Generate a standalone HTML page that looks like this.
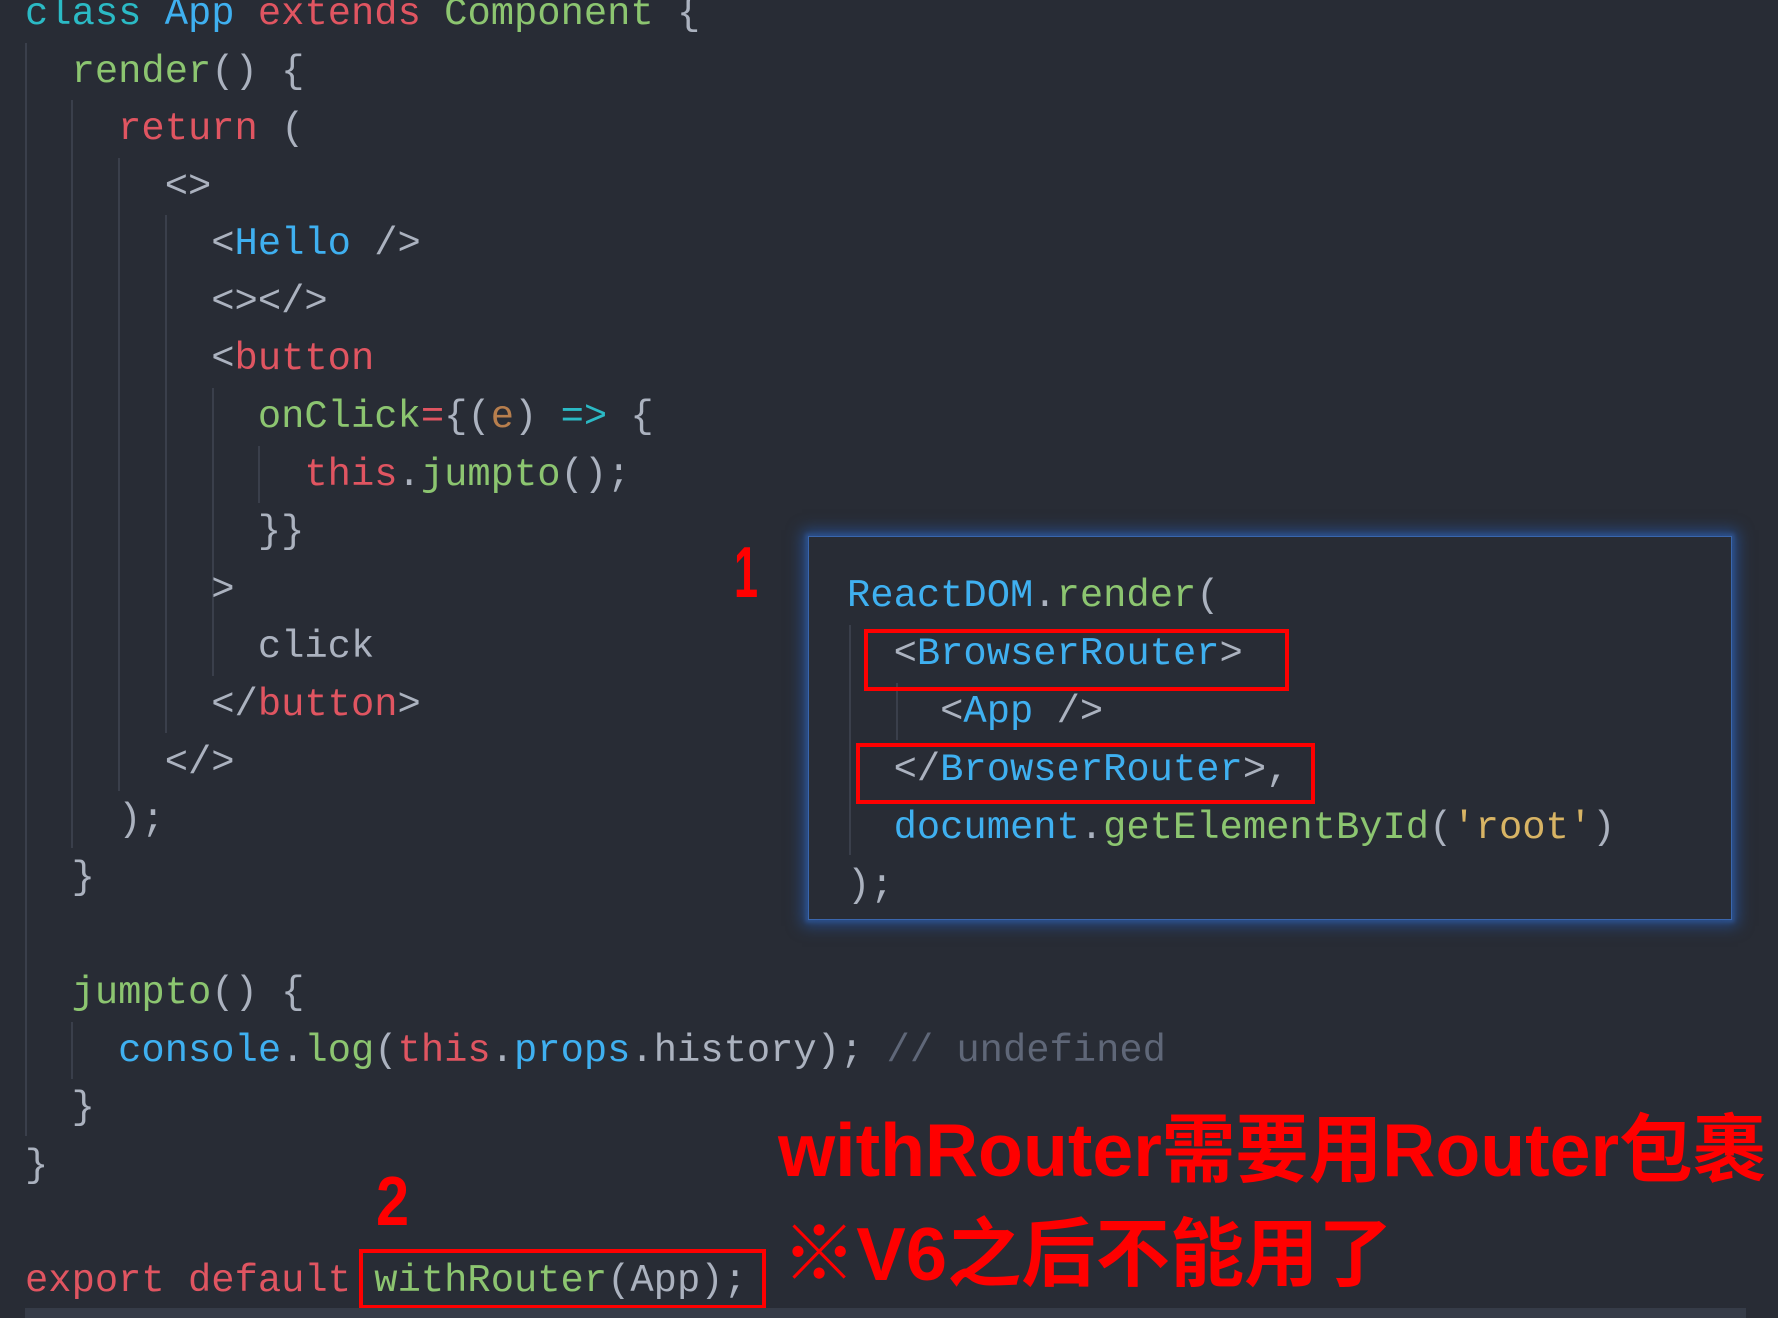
<!DOCTYPE html>
<html><head><meta charset="utf-8"><style>
html,body{margin:0;padding:0;background:#282c35;width:1778px;height:1318px;overflow:hidden;position:relative}
.l{position:absolute;white-space:pre;font-family:"Liberation Mono",monospace;font-size:38.8px;line-height:58px;height:58px;color:#abb2bf}
.g{position:absolute;width:2px;background:#3a3f4b}
.c{color:#2bbac5}.b{color:#3fb0f0}.r{color:#e05561}.gr{color:#8cc570}.o{color:#b77e4d}.y{color:#d8b464}.cm{color:#5f6778}
.box{position:absolute;border:4px solid #ff0000}
.red{position:absolute;color:#ff0000;font-family:"Liberation Sans","Noto Sans CJK SC",sans-serif;font-weight:bold;white-space:nowrap;transform-origin:0 50%}
</style></head><body>
<div class="g" style="left:25px;top:43px;height:1093px"></div>
<div class="g" style="left:71px;top:100px;height:748px"></div>
<div class="g" style="left:118px;top:158px;height:633px"></div>
<div class="g" style="left:165px;top:215px;height:518px"></div>
<div class="g" style="left:212px;top:388px;height:288px"></div>
<div class="g" style="left:258px;top:446px;height:57px"></div>
<div class="g" style="left:71px;top:1022px;height:57px"></div>

<div class="l" style="left:25px;top:-15px"><span class="c">class</span> <span class="b">App</span> <span class="r">extends</span> <span class="gr">Component</span> {</div>
<div class="l" style="left:25px;top:43px">  <span class="gr">render</span>() {</div>
<div class="l" style="left:25px;top:100px">    <span class="r">return</span> (</div>
<div class="l" style="left:25px;top:158px">      &lt;&gt;</div>
<div class="l" style="left:25px;top:215px">        &lt;<span class="b">Hello</span> /&gt;</div>
<div class="l" style="left:25px;top:273px">        &lt;&gt;&lt;/&gt;</div>
<div class="l" style="left:25px;top:330px">        &lt;<span class="r">button</span></div>
<div class="l" style="left:25px;top:388px">          <span class="gr">onClick</span><span class="r">=</span>{(<span class="o">e</span>) <span class="c">=&gt;</span> {</div>
<div class="l" style="left:25px;top:446px">            <span class="r">this</span>.<span class="gr">jumpto</span>();</div>
<div class="l" style="left:25px;top:503px">          }}</div>
<div class="l" style="left:25px;top:561px">        &gt;</div>
<div class="l" style="left:25px;top:618px">          click</div>
<div class="l" style="left:25px;top:676px">        &lt;/<span class="r">button</span>&gt;</div>
<div class="l" style="left:25px;top:734px">      &lt;/&gt;</div>
<div class="l" style="left:25px;top:791px">    );</div>
<div class="l" style="left:25px;top:849px">  }</div>
<div class="l" style="left:25px;top:964px">  <span class="gr">jumpto</span>() {</div>
<div class="l" style="left:25px;top:1022px">    <span class="b">console</span>.<span class="gr">log</span>(<span class="r">this</span>.<span class="b">props</span>.history); <span class="cm">// undefined</span></div>
<div class="l" style="left:25px;top:1079px">  }</div>
<div class="l" style="left:25px;top:1137px">}</div>
<div class="l" style="left:25px;top:1252px"><span class="r">export</span> <span class="r">default</span> <span class="gr">withRouter</span>(App);</div>
<div class="box" style="left:359px;top:1249px;width:399px;height:52px"></div>
<div style="position:absolute;left:25px;top:1308px;width:1721px;height:10px;background:#363c48"></div>

<div style="position:absolute;left:808px;top:536px;width:922px;height:382px;background:#282c35;border:1px solid #3a66ad;box-shadow:0 0 14px 6px #27487f, 0 0 4px 2px #3a66ad"></div>
<div class="g" style="left:849px;top:625px;height:230px"></div>
<div class="g" style="left:896px;top:683px;height:57px"></div>
<div class="l" style="left:847px;top:567px"><span class="b">ReactDOM</span>.<span class="gr">render</span>(</div>
<div class="l" style="left:847px;top:625px">  &lt;<span class="b">BrowserRouter</span>&gt;</div>
<div class="l" style="left:847px;top:683px">    &lt;<span class="b">App</span> /&gt;</div>
<div class="l" style="left:847px;top:741px">  &lt;/<span class="b">BrowserRouter</span>&gt;,</div>
<div class="l" style="left:847px;top:799px">  <span class="b">document</span>.<span class="gr">getElementById</span>(<span class="y">'root'</span>)</div>
<div class="l" style="left:847px;top:857px">);</div>
<div class="box" style="left:864px;top:629px;width:417px;height:54px"></div>
<div class="box" style="left:856px;top:743px;width:451px;height:53px"></div>

<div class="red" style="left:734px;top:538px;font-size:72px;line-height:70px;transform:scaleX(0.6)">1</div>
<div class="red" style="left:376px;top:1166px;font-size:70px;line-height:70px;transform:scaleX(0.85)">2</div>
<div class="red" style="left:778px;top:1108px;font-size:75px;line-height:84px;transform:scaleX(0.98)">withRouter需要用Router包裹</div>
<div class="red" style="left:782px;top:1212px;font-size:75px;line-height:84px;transform:scaleX(0.99)">※V6之后不能用了</div>
</body></html>
